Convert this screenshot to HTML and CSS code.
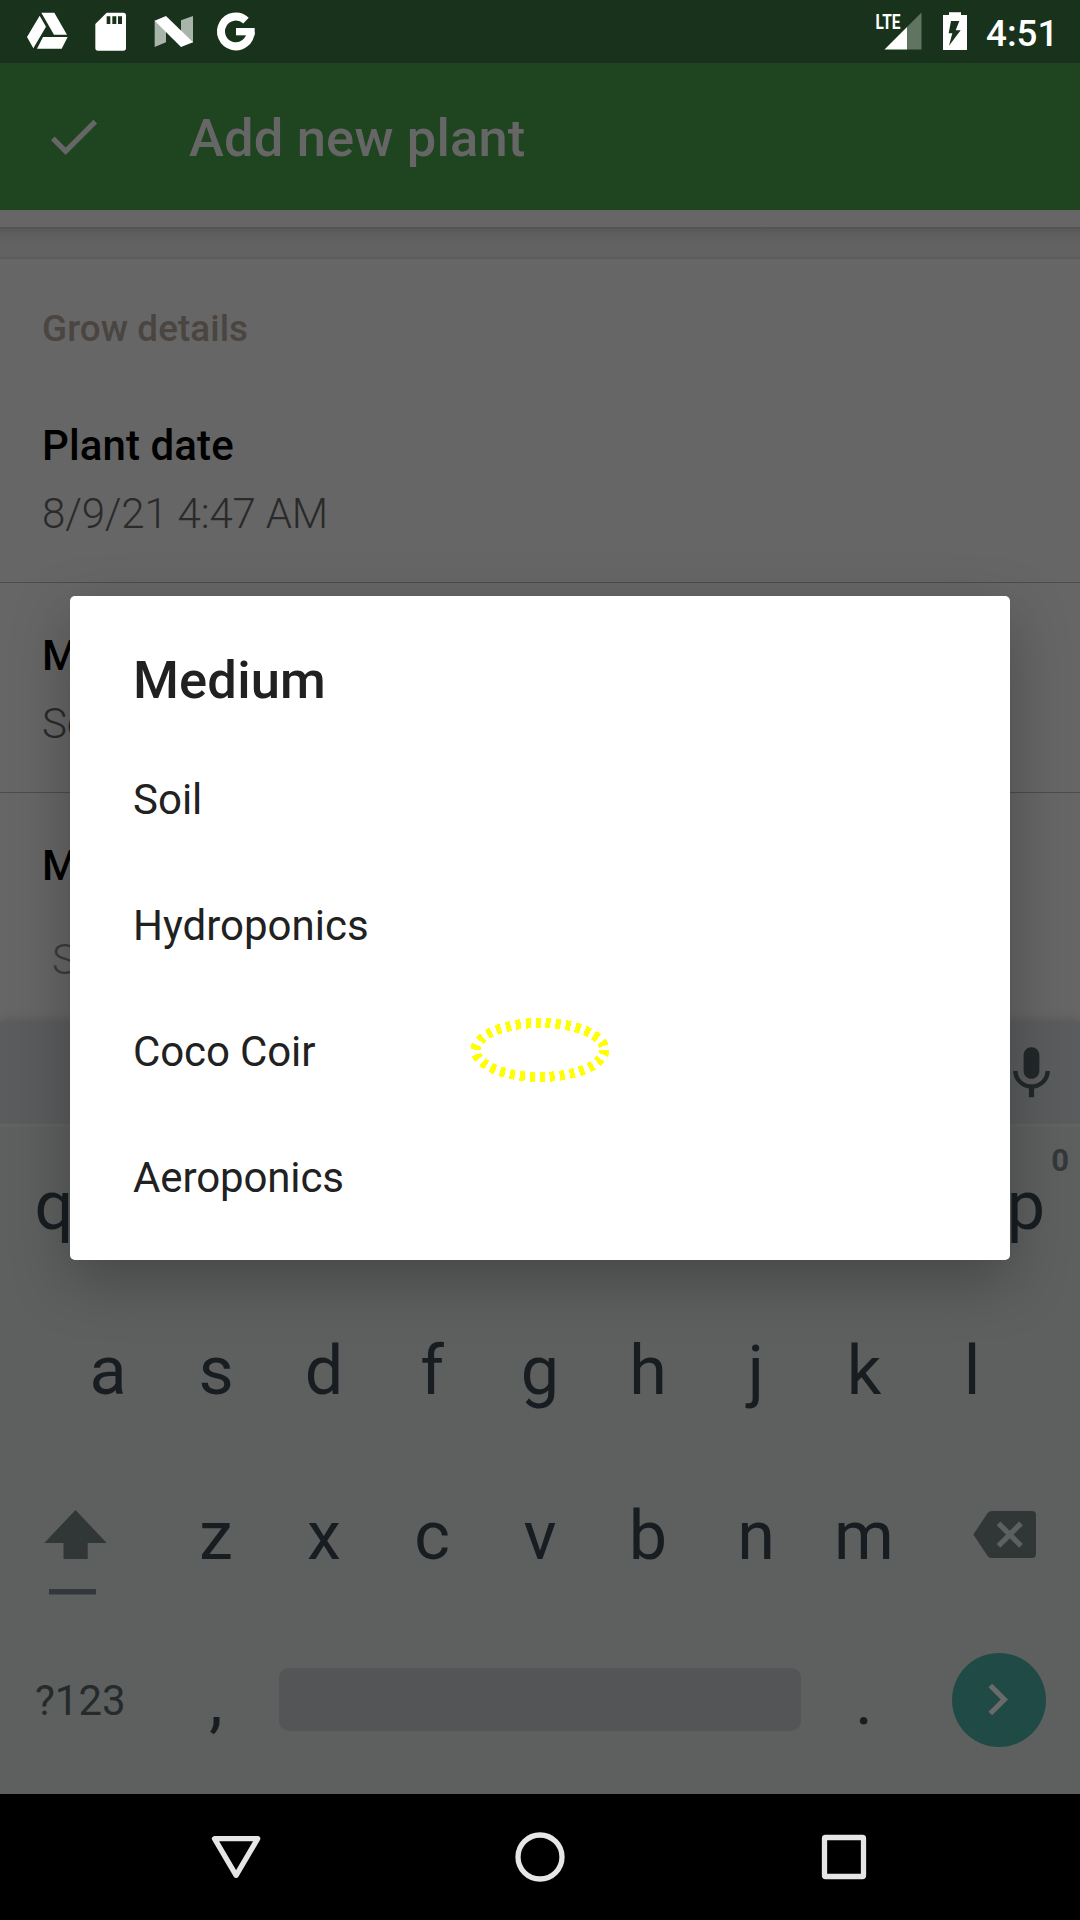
FILE: index.html
```html
<!DOCTYPE html>
<html lang="en">
<head>
<meta charset="utf-8">
<title>Add new plant</title>
<link rel="stylesheet" href="styles.css">
</head>
<body>
<div class="screen">
  <div class="status-bar">
    <svg class="status-drive" width="48" height="48" viewBox="72 27 144 144" fill="#fff"><path d="M124 38H163L201 104H162ZM119 47L138 80L100 145L81 111ZM129 111H203L185 146H111Z"/></svg>
    <svg class="status-sd" width="36" height="48" viewBox="279 27 108 144"><path fill="#fff" d="M320 38H370Q378 38 378 46V144Q378 152 370 152H294Q286 152 286 144V72Z"/><path fill="#18321b" d="M320 49h11v23h-11zM337 49h12v23h-12zM354 49h12v23h-12z"/></svg>
    <svg class="status-n" width="48" height="48" viewBox="450 27 144 144"><path fill="#a9b5ab" d="M464 61L498 80V127L464 141ZM543 61L579 48V128L543 110Z"/><path fill="#fff" d="M464 62L498 48L579 127L543 141Z"/></svg>
    <svg class="status-g" width="48" height="48" viewBox="637 27 144 144" fill="none" stroke="#fff"><path stroke-width="24" d="M739 62A44.500 44.500 0 1 0 753 95"/><path stroke-width="22" d="M709 95H765"/></svg>
    <div class="spacer"></div>
    <svg class="status-signal" width="54" height="48" viewBox="72 9 54 48"><path fill="#5f7561" d="M107 27L121.500 12.500V49.500H107Z"/><path fill="#fff" d="M84.500 49.500L107 27V49.500Z"/><text class="lte" x="75.500" y="29" textLength="25" lengthAdjust="spacingAndGlyphs">LTE</text></svg>
    <svg class="status-battery" width="24" height="48" viewBox="429 27 72 144"><path fill="#fff" d="M447 37H483V45H501V150H429V45H447Z"/><path fill="#18321b" d="M453 63H478L467 91H482L447 137L457 100H446Z"/></svg>
    <span class="clock">4:51</span>
  </div>

  <div class="app-bar">
    <svg width="63" height="63" viewBox="0 0 24 24" fill="#666"><path d="M9 16.170L4.830 12l-1.420 1.410L9 19 21 7l-1.410-1.410z"/></svg>
    <span class="app-title">Add new plant</span>
  </div>

  <div class="content">
    <div class="previous-card"></div>
    <div class="card-gap"></div>
    <div class="card">
      <div class="section-title">Grow details</div>
      <div class="field"><div class="label">Plant date</div><div class="value">8/9/21 4:47 AM</div></div>
      <div class="field"><div class="label">M</div><div class="value">So</div></div>
      <div class="field last"><div class="label">M</div><div class="hint">S</div></div>
    </div>
  </div>

  <div class="keyboard">
    <div class="suggestions">
      <svg width="63" height="63" viewBox="0 0 24 24" fill="#222829"><path d="M12 14c1.660 0 2.990-1.340 2.990-3L15 5c0-1.660-1.340-3-3-3S9 3.340 9 5v6c0 1.660 1.340 3 3 3zm5.300-3c0 3-2.540 5.100-5.300 5.100S6.700 14 6.700 11H5c0 3.410 2.720 6.230 6 6.720V21h2v-3.280c3.280-.480 6-3.300 6-6.720h-1.700z"/></svg>
    </div>
    <div class="keys first">
      <span class="key">q</span><span class="key">p<span class="alt">0</span></span>
    </div>
    <div class="keys home">
      <span class="key">a</span><span class="key">s</span><span class="key">d</span><span class="key">f</span><span class="key">g</span><span class="key">h</span><span class="key">j</span><span class="key">k</span><span class="key">l</span>
    </div>
    <div class="keys">
      <span class="key wide shift"><svg width="66" height="90" viewBox="42 1507 66 90"><path fill="#313736" d="M75.500 1510L106.700 1543H87.700V1559H63.500V1543H44.300Z"/><path fill="#34383a" d="M49 1589H96V1594.600H49Z"/></svg></span>
      <span class="key">z</span><span class="key">x</span><span class="key">c</span><span class="key">v</span><span class="key">b</span><span class="key">n</span><span class="key">m</span>
      <span class="key wide erase"><svg width="66" height="50" viewBox="972 1510 66 50"><path fill="#313736" d="M991.500 1511H1032Q1036 1511 1036 1515V1554Q1036 1558 1032 1558H991.500Q989 1558 987.300 1555.500L973.300 1534.500L987.300 1513.500Q989 1511 991.500 1511Z"/><path fill="none" stroke="#5e605f" stroke-width="5.300" d="M998.500 1523.300L1021 1545.800M1021 1523.300L998.500 1545.800"/></svg></span>
    </div>
    <div class="keys bottom">
      <span class="symbols">?123</span>
      <span class="key punct">,</span>
      <span class="space"></span>
      <span class="key punct">.</span>
      <span class="enter"><svg width="94" height="94" viewBox="952 1653 94 94"><path fill="none" stroke="#6a6a6a" stroke-width="5.300" d="M990.300 1685.500L1004.300 1699.500L990.300 1713.500"/></svg></span>
    </div>
  </div>

  <div class="nav-bar">
    <svg width="54" height="54" viewBox="209 1830 54 54"><path d="M214.500 1838.700H257.700L236.100 1875.300Z"/></svg>
    <svg width="54" height="54" viewBox="513 1830 54 54"><circle cx="540" cy="1857" r="22"/></svg>
    <svg width="54" height="54" viewBox="817 1830 54 54"><rect x="824.500" y="1837.500" width="39" height="39" rx="1"/></svg>
  </div>

  <div class="dialog">
    <div class="dialog-title">Medium</div>
    <div class="option">Soil</div>
    <div class="option">Hydroponics</div>
    <div class="option tight">Coco Coir</div>
    <div class="option tight">Aeroponics</div>
    <svg class="marker" width="142" height="66" viewBox="-71 -33 142 66"><ellipse rx="64.500" ry="27"/></svg>
  </div>
</div>
</body>
</html>
```
FILE: styles.css
```css
* { box-sizing: border-box; }

body {
  margin: 0;
  font-family: Roboto, "Noto Sans", sans-serif;
  background: #666;
}

.screen {
  position: relative;
  width: 1080px;
  height: 1920px;
  overflow: hidden;
  display: flex;
  flex-direction: column;
}

svg { display: block; flex: none; }

.status-bar {
  height: 63px;
  flex: none;
  display: flex;
  align-items: flex-start;
  padding: 9px 23px 0 24px;
  background: #18321b;
  color: #fff;
}
.status-sd { margin-left: 21px; }
.status-n { margin-left: 21px; }
.status-g { margin-left: 14px; }
.spacer { flex: 1; }
.lte { font-size: 21px; font-weight: 700; fill: #fff; }
.status-battery { margin-left: 17px; }
.clock {
  width: 71px;
  margin-left: 19px;
  font-size: 36.75px;
  font-weight: 500;
  line-height: 49px;
  white-space: nowrap;
}

.app-bar {
  height: 147px;
  flex: none;
  display: flex;
  align-items: center;
  gap: 84px;
  padding-left: 42px;
  background: #1f4420;
}
.app-title {
  padding-top: 3px;
  font-size: 52.5px;
  font-weight: 500;
  line-height: 62px;
  letter-spacing: .17px;
  color: #666;
}

.content {
  height: 812px;
  flex: none;
  overflow: hidden;
  display: flex;
  flex-direction: column;
}
.previous-card { height: 17px; flex: none; background: #666; }
.card-gap {
  height: 32px;
  flex: none;
  background: linear-gradient(#525252, #5a5a5a 3px, #606060 10px, #636363 28px, #5a5a5a);
}
.card { flex: none; background: #666; }
.section-title {
  height: 114px;
  padding: 48px 42px 0;
  font-size: 36.75px;
  font-weight: 500;
  line-height: 43px;
  letter-spacing: .1px;
  color: #4a4540;
}
.field {
  height: 210px;
  padding: 48px 42px 0;
  border-bottom: 1px solid #4c4c4c;
}
.field.last { border-bottom: 0; }
.label {
  font-size: 42px;
  font-weight: 500;
  line-height: 50px;
  letter-spacing: .1px;
  color: #000;
}
.value, .hint {
  margin-top: 18px;
  font-size: 42px;
  font-weight: 300;
  line-height: 50px;
  letter-spacing: -.17px;
  color: #2a2a2a;
}
.hint { margin: 44px 0 0 10px; color: #3c3c3c; }

.keyboard {
  height: 772px;
  flex: none;
  background: #5e605f;
  box-shadow: 0 -2px 10px rgba(0, 0, 0, .15);
}
.suggestions {
  height: 105px;
  display: flex;
  align-items: center;
  justify-content: flex-end;
  padding-right: 17px;
  background: #5b5c5e;
  border-bottom: 3px solid #606362;
}
.keys { height: 165px; display: flex; }
.keys.first {
  height: 158px;
  margin-bottom: 3px;
  justify-content: space-between;
}
.keys.home { padding: 0 54px; }
.key {
  position: relative;
  width: 108px;
  flex: none;
  display: flex;
  align-items: center;
  justify-content: center;
  font-size: 68.25px;
  color: #171d21;
}
.alt {
  position: absolute;
  right: 11px;
  top: 16px;
  font-size: 31px;
  font-weight: 700;
  line-height: 36px;
  color: #34383b;
}
.key.wide { width: 162px; }
.shift { justify-content: flex-start; padding: 33px 0 0 42px; }
.erase { justify-content: flex-end; padding: 0 42px 2px 0; }
.keys.bottom { align-items: center; }
.symbols {
  width: 162px;
  padding-left: 35px;
  font-size: 42px;
  line-height: 50px;
  color: #252b2c;
}
.punct { height: 80px; }
.bottom .space {
  width: 522px;
  height: 63px;
  margin: 0 9px 2px;
  border-radius: 10px;
  background: #545557;
}
.enter {
  width: 94px;
  height: 94px;
  margin: 0 0 2px 34px;
  border-radius: 50%;
  background: #204a45;
}

.nav-bar {
  flex: 1;
  display: flex;
  justify-content: center;
  gap: 250px;
  padding-top: 36px;
  background: #000;
}
.nav-bar path, .nav-bar circle, .nav-bar rect {
  fill: none;
  stroke: #e6e6e6;
  stroke-width: 5.3;
  stroke-linejoin: round;
}

.dialog {
  position: absolute;
  left: 70px;
  top: 596px;
  width: 940px;
  height: 664px;
  padding: 53px 63px 0;
  border-radius: 5px;
  background: #fff;
  box-shadow: 0 20px 60px rgba(0, 0, 0, .27);
  color: #212121;
}
.dialog-title {
  height: 88px;
  font-size: 52.5px;
  font-weight: 500;
  line-height: 62px;
  letter-spacing: .17px;
}
.option { height: 126px; font-size: 42px; line-height: 126px; }
.option.tight { letter-spacing: -.12px; }
.marker { position: absolute; left: 399px; top: 421px; }
.marker ellipse {
  fill: none;
  stroke: #ff0;
  stroke-width: 10;
  stroke-dasharray: 5 5;
  shape-rendering: crispEdges;
}
```
